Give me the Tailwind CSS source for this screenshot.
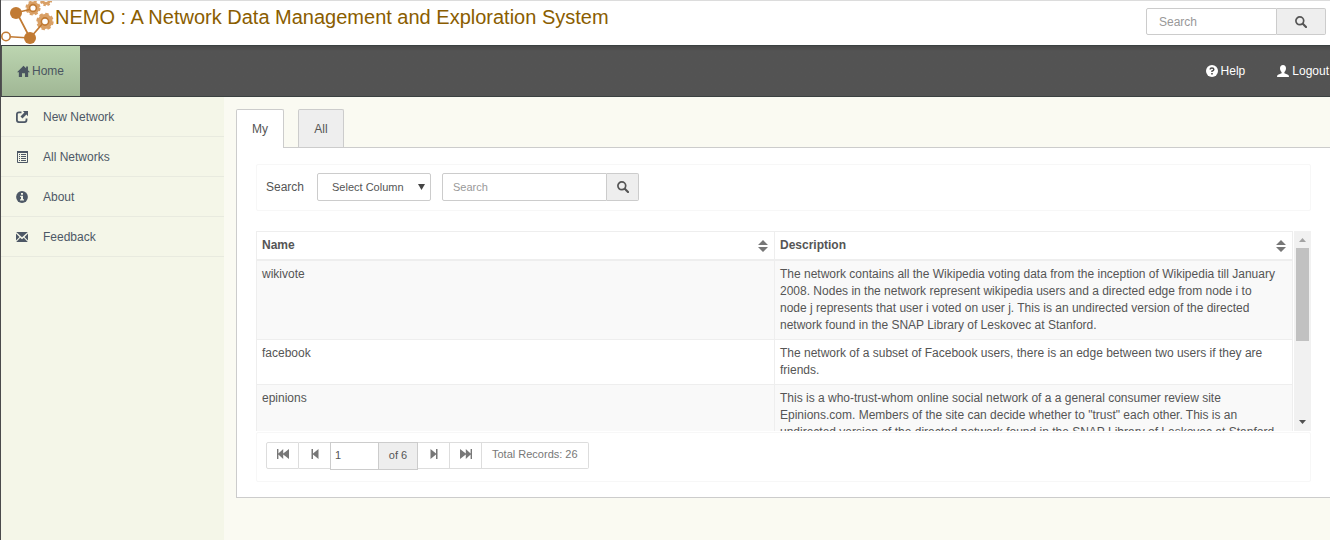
<!DOCTYPE html>
<html lang="en">
<head>
<meta charset="utf-8">
<meta name="viewport" content="width=device-width, initial-scale=1">
<title>NEMO : A Network Data Management and Exploration System</title>
<script src="https://cdn.jsdelivr.net/npm/@tailwindcss/browser@4"></script>
</head>
<body class="flex min-h-screen flex-col border-l border-[#4a4a4c] bg-[#fafaf2] font-['Liberation_Sans',Arial,sans-serif] text-xs text-[#555555]">

<svg class="hidden" aria-hidden="true">
  <symbol id="search" viewBox="0 0 12 12"><circle cx="4.8" cy="4.8" r="3.9" fill="none" stroke="currentColor" stroke-width="1.7"/><path d="M7.8 7.8 11 11" stroke="currentColor" stroke-width="2.1" stroke-linecap="round"/></symbol>
  <symbol id="step" viewBox="0 0 12 12"><path fill="currentColor" d="M2.500 1h1.500v4.600L9.500 1v10L4 6.400V11H2.500z"/></symbol>
  <symbol id="fast" viewBox="0 0 12 12"><path fill="currentColor" d="M0 1h1.400v4.600L6.200 1v4.600L12 1v10L6.200 6.400V11L1.400 6.400V11H0z"/></symbol>
  <symbol id="sort" viewBox="0 0 10 12"><path fill="currentColor" d="M5 0l5 5H0zM0 7h10l-5 5z"/></symbol>
</svg>

<header class="flex h-[45px] shrink-0 justify-between border-t border-[#dcdcdc] bg-white">
  <div class="flex">
    <svg class="h-11 w-[54px]" viewBox="0 0 54 44" aria-hidden="true">
      <g fill="none" stroke="#d9a066">
        <circle cx="32" cy="7" r="5" stroke-width="3"/><circle cx="32" cy="7" r="6.500" stroke-width="2.200" stroke-dasharray="2.900 2.200"/>
        <circle cx="44" cy="20.500" r="5.600" stroke-width="4"/><circle cx="44" cy="20.500" r="7.500" stroke-width="2.400" stroke-dasharray="3.400 2.490"/>
        <circle cx="45" cy="-1" r="3.500" stroke-width="3"/><circle cx="45" cy="-1" r="5.200" stroke-width="2" stroke-dasharray="2.400 1.700"/>
      </g>
      <path d="M16 11.500 31 8M16 12l13 25M29 37 43 21M5 35.500l24 1.500" stroke="#c17a33" stroke-width="1.700"/>
      <g fill="#c17a33"><circle cx="15" cy="12" r="6"/><circle cx="29" cy="37" r="6"/></g>
      <g fill="#fff" stroke="#c17a33" stroke-width="1.600"><circle cx="5" cy="35.500" r="4.200"/><circle cx="32" cy="7" r="3.400"/><circle cx="44" cy="20.500" r="3.600"/></g>
    </svg>
    <h1 class="mt-0.5 text-xl text-[#8a5d00]">NEMO : A Network Data Management and Exploration System</h1>
  </div>
  <form class="mt-[7px] mr-1 flex h-[27px] text-xs">
    <input type="text" aria-label="Search site" placeholder="Search" class="w-[131px] rounded-l-xs border border-[#cccccc] px-3 placeholder:text-[#999999]">
    <button type="button" aria-label="Search site" class="flex w-[49px] items-center justify-center rounded-r-xs border border-l-0 border-[#cccccc] bg-[#eeeeee]"><svg class="size-3"><use href="#search"/></svg></button>
  </form>
</header>

<nav class="flex h-13 shrink-0 justify-between border-y border-[#3b4141] bg-[#535353] bg-linear-to-b from-[#494949] from-0% to-[#535353] to-10%">
  <a href="#" class="ml-px flex w-[78px] items-center gap-0.5 bg-linear-to-b from-[#bcd5b0] to-[#a0b795] pl-[15px] text-[#4a5560]">
    <svg class="size-[13px]" viewBox="0 0 14 14"><path fill="currentColor" d="M7 .8 9.800 3.600V1.500h2v4.100L14 7.900H12V13H8.600V8.800H5.400V13H2V7.900H0z"/></svg>Home
  </a>
  <div class="flex items-center gap-8 pr-px text-white">
    <a href="#" class="flex items-center gap-[3px]"><svg class="size-3" viewBox="0 0 12 12"><circle cx="6" cy="6" r="6" fill="currentColor"/><path d="M4.200 4.600Q4.200 2.900 6 2.900T7.800 4.500Q7.800 5.600 6 6.100V7" fill="none" stroke="#4b4b4b" stroke-width="1.500"/><path fill="#4b4b4b" d="M5.200 8h1.600v1.600H5.200z"/></svg>Help</a>
    <a href="#" class="flex items-center gap-[3px]"><svg class="size-3" viewBox="0 0 12 12"><path fill="currentColor" d="M6 0C7.900 0 9 1.300 9 3.200 9 5 8.200 6.300 7.400 7v1.200L11 9.700q1 .5 1 2.300H0q0-1.800 1-2.300l3.600-1.500V7C3.800 6.300 3 5 3 3.200 3 1.300 4.100 0 6 0z"/></svg>Logout</a>
  </div>
</nav>

<div class="flex grow">
  <aside class="w-[223px] shrink-0 bg-[#f4f6e8]">
    <ul>
      <li><a href="#" class="flex h-10 items-center gap-[15px] border-b border-[#e8eadf] pl-[15px] text-[#4d5866]"><svg class="size-3" viewBox="0 0 12 12"><path d="M5.500 1.400H3Q.9 1.400.9 3.500v5.600q0 2 2 2h5.600q2 0 2-2V7.500" fill="none" stroke="currentColor" stroke-width="1.800"/><path fill="currentColor" d="M6.800 0H12v5.200L10.400 3.600 6.500 7.500 4.500 5.500 8.400 1.600z"/></svg>New Network</a></li>
      <li><a href="#" class="flex h-10 items-center gap-[15px] border-b border-[#e8eadf] pl-[15px] text-[#4d5866]"><svg class="size-3" viewBox="0 0 12 12"><path fill="none" stroke="currentColor" d="M1.500.5h10v11h-10z"/><path fill="currentColor" d="M1 0h11v2H1zM3 3h1v1H3zM5 3h5v1H5zM3 5h1v1H3zM5 5h5v1H5zM3 7h1v1H3zM5 7h5v1H5zM3 9h1v1H3zM5 9h5v1H5z"/></svg>All Networks</a></li>
      <li><a href="#" class="flex h-10 items-center gap-[15px] border-b border-[#e8eadf] pl-[15px] text-[#4d5866]"><svg class="size-3" viewBox="0 0 12 12"><circle cx="6" cy="6" r="5.900" fill="currentColor"/><path fill="#f4f6e8" d="M5 2h2v1.700H5zM4.200 4.800H7v3.400h1v1.300H4V8.200h1V6h-.8z"/></svg>About</a></li>
      <li><a href="#" class="flex h-10 items-center gap-[15px] border-b border-[#e8eadf] pl-[15px] text-[#4d5866]"><svg class="size-3" viewBox="0 0 12 12"><path fill="currentColor" d="M.2 1h11.600L6 6.200zM0 2.600 3.500 6 0 9.400zM12 2.600V9.400L8.500 6zM.2 11l4-4.300L6 8.200l1.800-1.500 4 4.300z"/></svg>Feedback</a></li>
    </ul>
  </aside>

  <main class="min-w-0 flex-1 pt-3 pb-10 pl-3">
    <div class="flex gap-3.5">
      <button type="button" class="relative z-10 -mb-px h-[39px] w-12 rounded-t-xs border border-b-0 border-[#cccccc] bg-white">My</button>
      <button type="button" class="h-[38px] w-[46px] rounded-t-xs border border-b-0 border-[#cccccc] bg-[#eeeeee]">All</button>
    </div>
    <section class="border border-r-0 border-[#cccccc] bg-white px-[19px] pt-4 pb-[15px]">
      <form class="flex h-[47px] items-center rounded-xs border border-[#f7f7f7] pb-px pl-[9px]">
        <label for="column">Search</label>
        <div class="relative ml-[13px]">
          <select id="column" class="h-7 w-[114px] appearance-none rounded-xs border border-[#cccccc] bg-white pl-3.5 text-[11px]"><option>Select Column</option><option>Name</option><option>Description</option></select>
          <svg class="pointer-events-none absolute top-[11px] right-1.5 h-1.5 w-[7px]" viewBox="0 0 7 6"><path fill="#444" d="M0 0h7L3.500 6z"/></svg>
        </div>
        <input type="text" aria-label="Search text" placeholder="Search" class="ml-[11px] h-7 w-[165px] rounded-l-xs border border-[#cccccc] px-2.5 text-[11px] placeholder:text-[#999999]">
        <button type="button" aria-label="Search networks" class="flex h-7 w-8 items-center justify-center rounded-r-xs border border-l-0 border-[#cccccc] bg-[#eeeeee]"><svg class="size-3"><use href="#search"/></svg></button>
      </form>

      <div class="mt-5 flex h-[200px]">
        <div class="grow overflow-hidden">
          <table class="w-full table-fixed border-collapse text-left leading-[17px]">
            <thead>
              <tr>
                <th scope="col" class="border border-b-2 border-[#eeeeee] py-[5px] pr-1.5 pl-[5px]"><div class="flex items-center justify-between">Name<svg class="h-3 w-2.5 text-[#777777]"><use href="#sort"/></svg></div></th>
                <th scope="col" class="border border-b-2 border-[#eeeeee] py-[5px] pr-1.5 pl-[5px]"><div class="flex items-center justify-between">Description<svg class="h-3 w-2.5 text-[#777777]"><use href="#sort"/></svg></div></th>
              </tr>
            </thead>
            <tbody class="align-top">
              <tr class="bg-[#f9f9f9]"><td class="border border-[#eeeeee] p-[5px]">wikivote</td><td class="border border-[#eeeeee] py-[5px] pr-[13px] pl-[5px]">The network contains all the Wikipedia voting data from the inception of Wikipedia till January 2008. Nodes in the network represent wikipedia users and a directed edge from node i to node j represents that user i voted on user j. This is an undirected version of the directed network found in the SNAP Library of Leskovec at Stanford.</td></tr>
              <tr><td class="border border-[#eeeeee] p-[5px]">facebook</td><td class="border border-[#eeeeee] py-[5px] pr-[13px] pl-[5px]">The network of a subset of Facebook users, there is an edge between two users if they are friends.</td></tr>
              <tr class="bg-[#f9f9f9]"><td class="border border-[#eeeeee] p-[5px]">epinions</td><td class="border border-[#eeeeee] py-[5px] pr-[13px] pl-[5px]">This is a who-trust-whom online social network of a a general consumer review site Epinions.com. Members of the site can decide whether to "trust" each other. This is an undirected version of the directed network found in the SNAP Library of Leskovec at Stanford.</td></tr>
            </tbody>
          </table>
        </div>
        <div class="ml-px flex w-[17px] shrink-0 flex-col items-center bg-[#f1f1f1]" aria-hidden="true">
          <svg class="h-[17px] w-[17px] shrink-0" viewBox="0 0 17 17"><path fill="#a3a3a3" d="M5 11h7L8.500 7z"/></svg>
          <div class="h-[93px] w-[13px] bg-[#c1c1c1]"></div>
          <svg class="mt-auto h-[17px] w-[17px] shrink-0" viewBox="0 0 17 17"><path fill="#505050" d="M5 6h7l-3.500 4z"/></svg>
        </div>
      </div>

      <div class="mt-px flex h-[50px] rounded-xs border border-[#f7f7f7] pt-[9px] pl-[9px] text-[11px] text-[#777777]">
        <button type="button" aria-label="First page" class="flex h-[27px] w-[33px] items-center justify-center rounded-l-xs border border-[#dddddd] pb-1"><svg class="size-3"><use href="#fast"/></svg></button>
        <button type="button" aria-label="Previous page" class="flex h-[27px] w-[31px] items-center justify-center border-y border-[#dddddd] pb-1"><svg class="size-3"><use href="#step"/></svg></button>
        <input type="text" aria-label="Page" value="1" class="h-7 w-[49px] border border-[#cccccc] px-1 pb-0.5 text-[#555555]">
        <span class="flex h-7 w-[39px] items-center justify-center border border-l-0 border-[#cccccc] bg-[#eeeeee] pb-0.5 text-[#555555]">of 6</span>
        <button type="button" aria-label="Next page" class="flex h-[27px] w-8 items-center justify-center border border-l-0 border-[#dddddd] pb-1"><svg class="size-3 rotate-180"><use href="#step"/></svg></button>
        <button type="button" aria-label="Last page" class="flex h-[27px] w-8 items-center justify-center border border-l-0 border-[#dddddd] pb-1"><svg class="size-3 rotate-180"><use href="#fast"/></svg></button>
        <span class="flex h-[27px] items-center rounded-r-xs border border-l-0 border-[#dddddd] px-2.5 pb-0.5">Total Records: 26</span>
      </div>
    </section>
  </main>
</div>
</body>
</html>
